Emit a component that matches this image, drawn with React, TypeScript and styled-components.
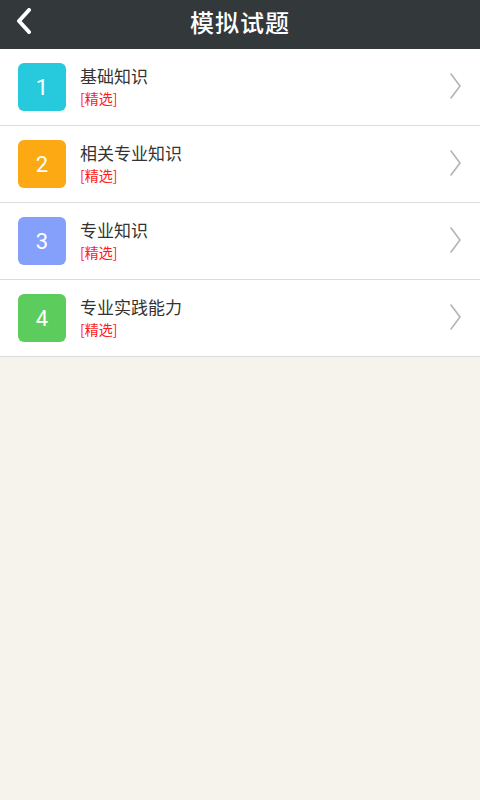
import React from 'react';
import styled, { createGlobalStyle } from 'styled-components';

const Global = createGlobalStyle`
  html, body { margin: 0; padding: 0; background: #f6f3ec; }
  body { font-family: "Noto Sans CJK SC", "Noto Sans", sans-serif; }
`;

const Root = styled.div`width: 480px; min-height: 800px; background: #f6f3ec; display: flex; flex-direction: column;`;
const Header = styled.div`height: 49px; background: #33383b; display: flex; align-items: center; justify-content: center; position: relative;`;
const BackBtn = styled.div`position: absolute; left: 12px; top: 6px; width: 24px; height: 30px; display: flex; align-items: center; justify-content: center;`;
const HeaderTitle = styled.h1`margin: 0; font-size: 24px; font-weight: 500; color: #ffffff; letter-spacing: 1px; line-height: 1; margin-top: -6px;`;
const List = styled.div`display: flex; flex-direction: column; background: #ffffff;`;
const Row = styled.div`height: 76px; border-bottom: 1px solid #dcdcdc; display: flex; align-items: center; padding: 0 18px; box-sizing: content-box;`;
const Badge = styled.div<{ $color: string }>`width: 48px; height: 48px; border-radius: 6px; background: ${p => p.$color}; color: #fff; display: flex; align-items: center; justify-content: center; font-family: Roboto, "Noto Sans", sans-serif; font-size: 22px; flex-shrink: 0;`;
const Texts = styled.div`flex: 1; margin-left: 14px; display: flex; flex-direction: column; margin-top: -2px;`;
const Title = styled.div`font-size: 17px; color: #333333; line-height: 24px;`;
const Tag = styled.div`font-size: 14px; color: #ff1a1a; line-height: 20px;`;
const Chevron = styled.div`width: 14px; height: 28px; margin-right: -1px; margin-top: -2px;`;

const items = [
  { n: 1, title: '基础知识', color: '#27cadc' },
  { n: 2, title: '相关专业知识', color: '#fca913' },
  { n: 3, title: '专业知识', color: '#84a0fb' },
  { n: 4, title: '专业实践能力', color: '#5ccd5c' },
];

export default function App() {
  return (
    <Root>
      <Global />
      <Header>
        <BackBtn>
          <svg width="20" height="26" viewBox="0 0 20 26">
            <path d="M15 2 L5 13 L15 24" fill="none" stroke="#fff" strokeWidth="4" strokeLinecap="round" strokeLinejoin="round" />
          </svg>
        </BackBtn>
        <HeaderTitle>模拟试题</HeaderTitle>
      </Header>
      <List>
        {items.map(it => (
          <Row key={it.n}>
            <Badge $color={it.color}>{it.n}</Badge>
            <Texts>
              <Title>{it.title}</Title>
              <Tag>[精选]</Tag>
            </Texts>
            <Chevron>
              <svg width="14" height="28" viewBox="0 0 14 28">
                <path d="M2 2 L11 14 L2 26" fill="none" stroke="#b4b4b4" strokeWidth="1.6" strokeLinecap="round" strokeLinejoin="round" />
              </svg>
            </Chevron>
          </Row>
        ))}
      </List>
    </Root>
  );
}
